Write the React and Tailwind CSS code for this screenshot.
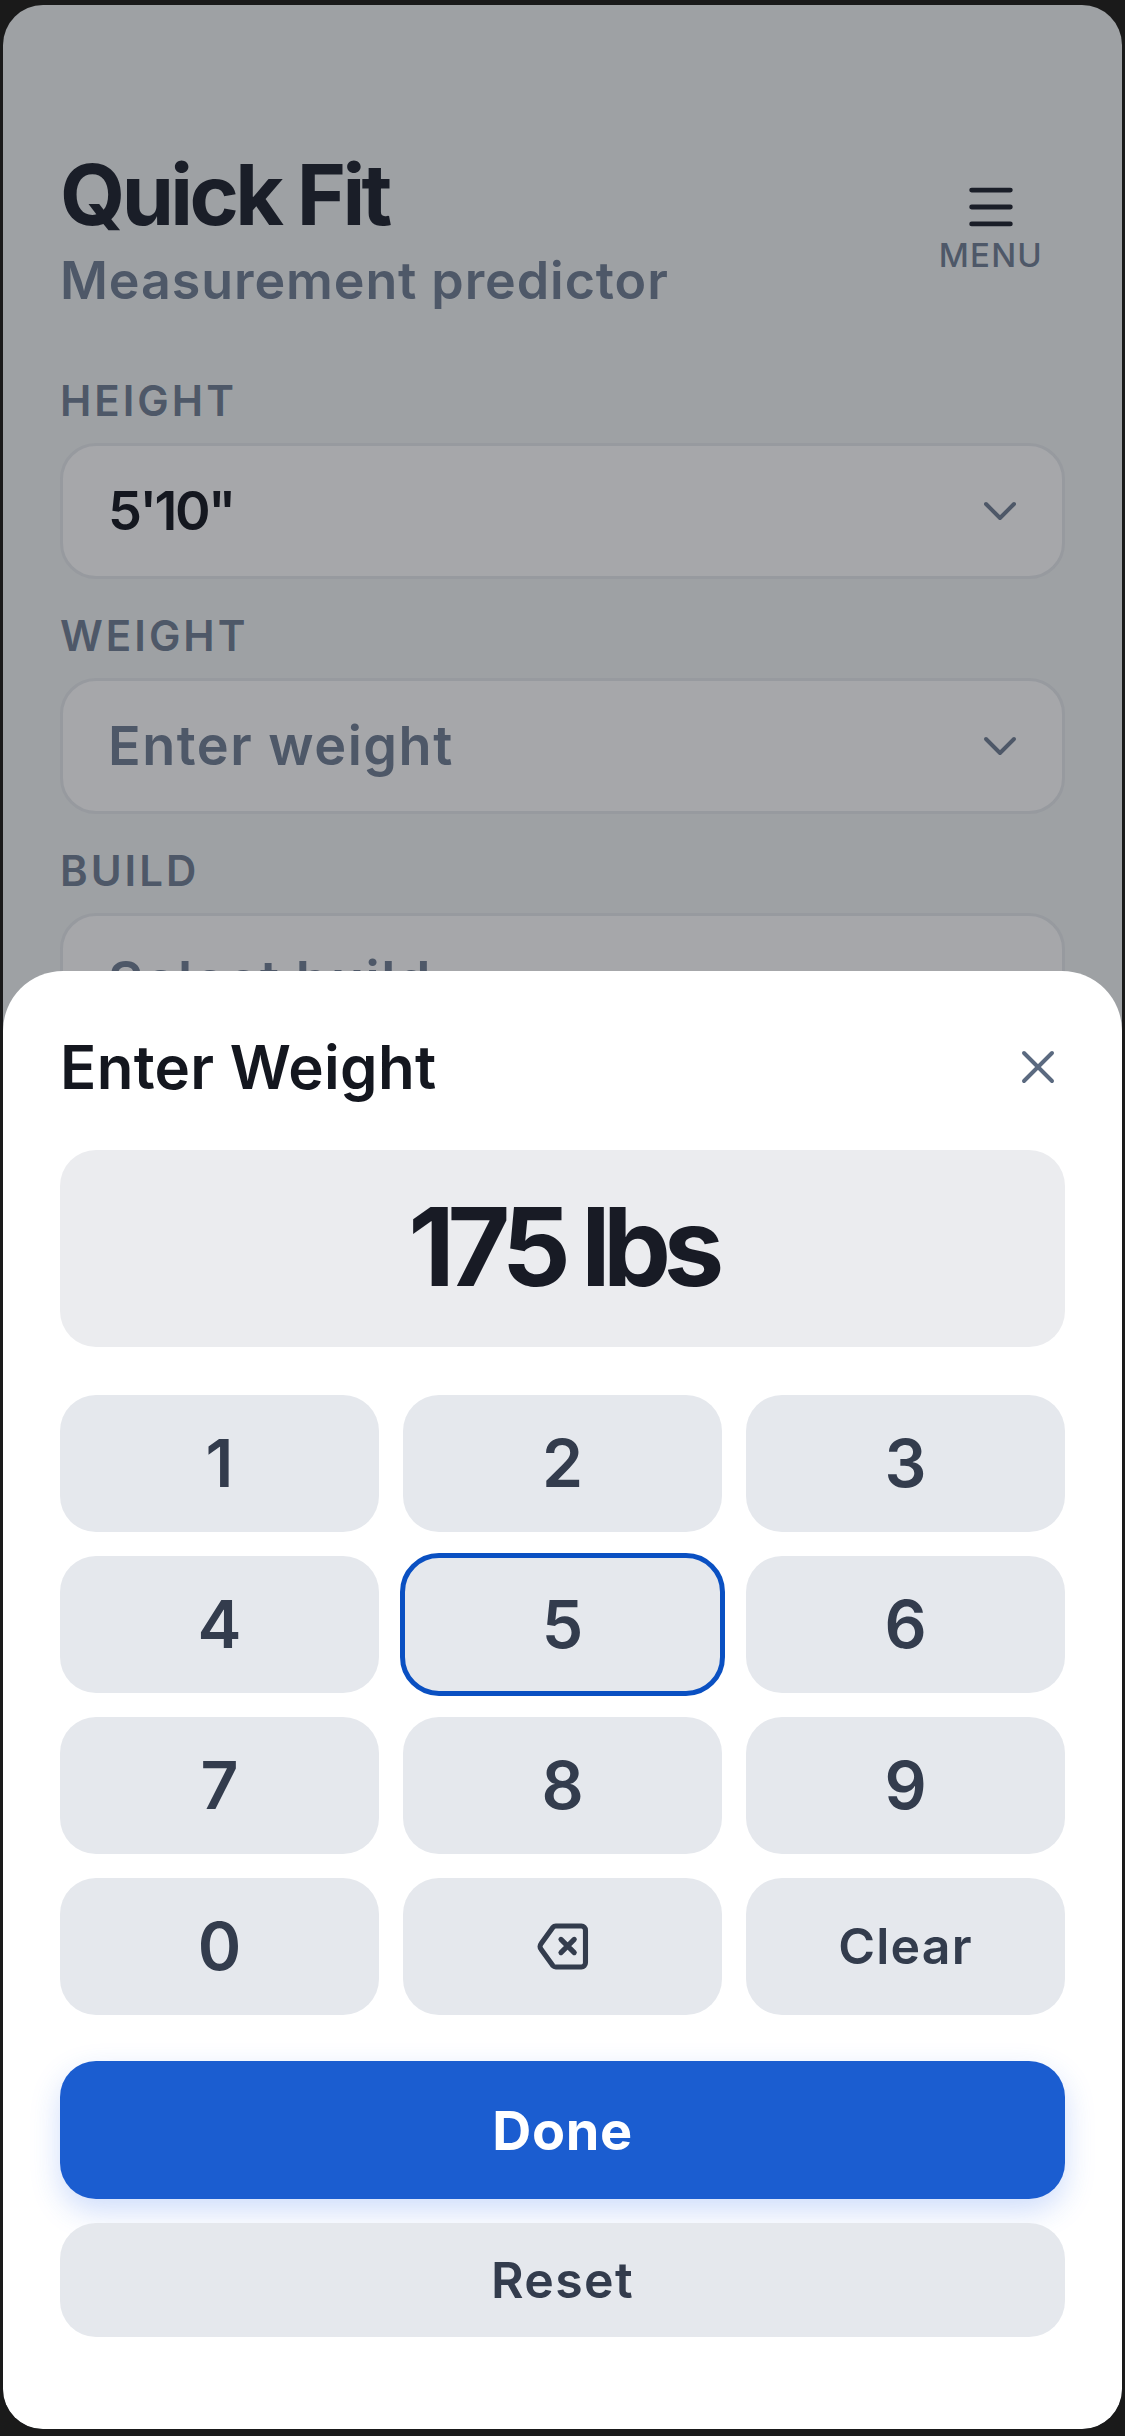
import { ChevronDown, Menu, X } from 'lucide-react';

const keys = ['1', '2', '3', '4', '5', '6', '7', '8', '9', '0'];

function Field({ label, value, muted }) {
  return (
    <div className="flex flex-col">
      <span className="h-[60px] pt-[1px] text-[42px] leading-[60px] font-semibold tracking-[3px] text-[#4e5868]">{label}</span>
      <div className="mt-[13px] flex h-[136px] items-center justify-between rounded-[36px] border-[3px] border-[#979a9f] bg-[#a6a7aa] pl-[45px] pr-[34px]">
        <span className={`pb-[2px] text-[54px] font-semibold ${muted ? 'tracking-[1.5px] text-[#4e5868]' : 'tracking-[-2.5px] text-[#14171f]'}`}>{value}</span>
        <ChevronDown size={56} strokeWidth={1.7} className="text-[#4e5868]" />
      </div>
    </div>
  );
}

function Backspace() {
  return (
    <svg width="52" height="47" viewBox="0 0 50 46" fill="none" stroke="currentColor" strokeWidth="5" strokeLinecap="round" strokeLinejoin="round">
      <path d="M18 3H43a4 4 0 0 1 4 4V39a4 4 0 0 1-4 4H18a4 4 0 0 1-3-1.3L3.5 25.6a4 4 0 0 1 0-5.2L15 4.3A4 4 0 0 1 18 3z" />
      <path d="M23 16l13 13M36 16L23 29" />
    </svg>
  );
}

export default function App() {
  return (
    <div className="h-[2436px] w-[1125px] bg-[#1a1a1a] px-[3px] pt-[5px] font-['Inter',sans-serif]">
      <div className="relative h-[2424px] overflow-hidden rounded-[40px] bg-[#9ea1a4] px-[57px] pt-[144px]">
        {/* Header */}
        <div className="flex items-start justify-between">
          <div>
            <h1 className="h-[92px] text-[84px] leading-[92px] font-bold tracking-[-3.6px] text-[#1a1e28]">Quick Fit</h1>
            <p className="h-[79px] text-[52px] leading-[79px] font-semibold tracking-[0.9px] text-[#4e5868]">Measurement predictor</p>
          </div>
          <div className="mr-[22px] mt-[29px] flex flex-col items-center">
            <Menu size={58} strokeWidth={2} className="text-[#1a1e28]" />
            <span className="mt-[-1px] text-[33px] leading-[40px] font-medium tracking-[1.2px] text-[#4e5868]">MENU</span>
          </div>
        </div>

        {/* Form behind the sheet */}
        <div className="mt-[50px] flex flex-col gap-[26px]">
          <Field label="HEIGHT" value={`5'10"`} />
          <Field label="WEIGHT" value="Enter weight" muted />
          <Field label="BUILD" value="Select build" muted />
        </div>

        {/* Bottom sheet */}
        <div className="absolute inset-x-0 bottom-0 h-[1458px] rounded-t-[60px] rounded-b-[40px] bg-white px-[57px] pt-[48px]">
          <div className="flex h-[96px] items-center justify-between">
            <h2 className="text-[60px] font-semibold tracking-[0.3px] text-[#14171f]">Enter Weight</h2>
            <X size={56} strokeWidth={1.7} className="mr-[-1px] text-[#5b6a80]" />
          </div>

          <div className="mt-[35px] flex h-[197px] items-center justify-center rounded-[36px] bg-[#ebecef] pb-[4px] text-[108px] font-bold tracking-[-7.5px] text-[#181b25]">
            175 lbs
          </div>

          <div className="mt-[48px] grid grid-cols-3 gap-[24px] text-[#333c4d]">
            {keys.map((k) => (
              <button
                key={k}
                className={`flex h-[137px] items-center justify-center rounded-[36px] bg-[#e5e8ed] text-[66px] font-semibold ${k === '5' ? 'outline-[5px] outline-offset-[-2px] outline-[#0a50c2]' : ''}`}
              >
                {k}
              </button>
            ))}
            <button className="flex h-[137px] items-center justify-center rounded-[36px] bg-[#e5e8ed]">
              <Backspace />
            </button>
            <button className="flex h-[137px] items-center justify-center rounded-[36px] bg-[#e5e8ed] text-[50px] font-semibold tracking-[1.2px]">
              Clear
            </button>
          </div>

          <button className="mt-[46px] flex h-[138px] w-full items-center justify-center rounded-[36px] bg-[#1b5dd0] text-[54px] font-bold tracking-[0.6px] text-white shadow-[0_12px_30px_rgba(37,99,235,0.22)]">
            Done
          </button>
          <button className="mt-[24px] flex h-[114px] w-full items-center justify-center rounded-[36px] bg-[#e5e8ed] text-[50px] font-semibold tracking-[1.4px] text-[#333c4d]">
            Reset
          </button>
        </div>
      </div>
    </div>
  );
}
